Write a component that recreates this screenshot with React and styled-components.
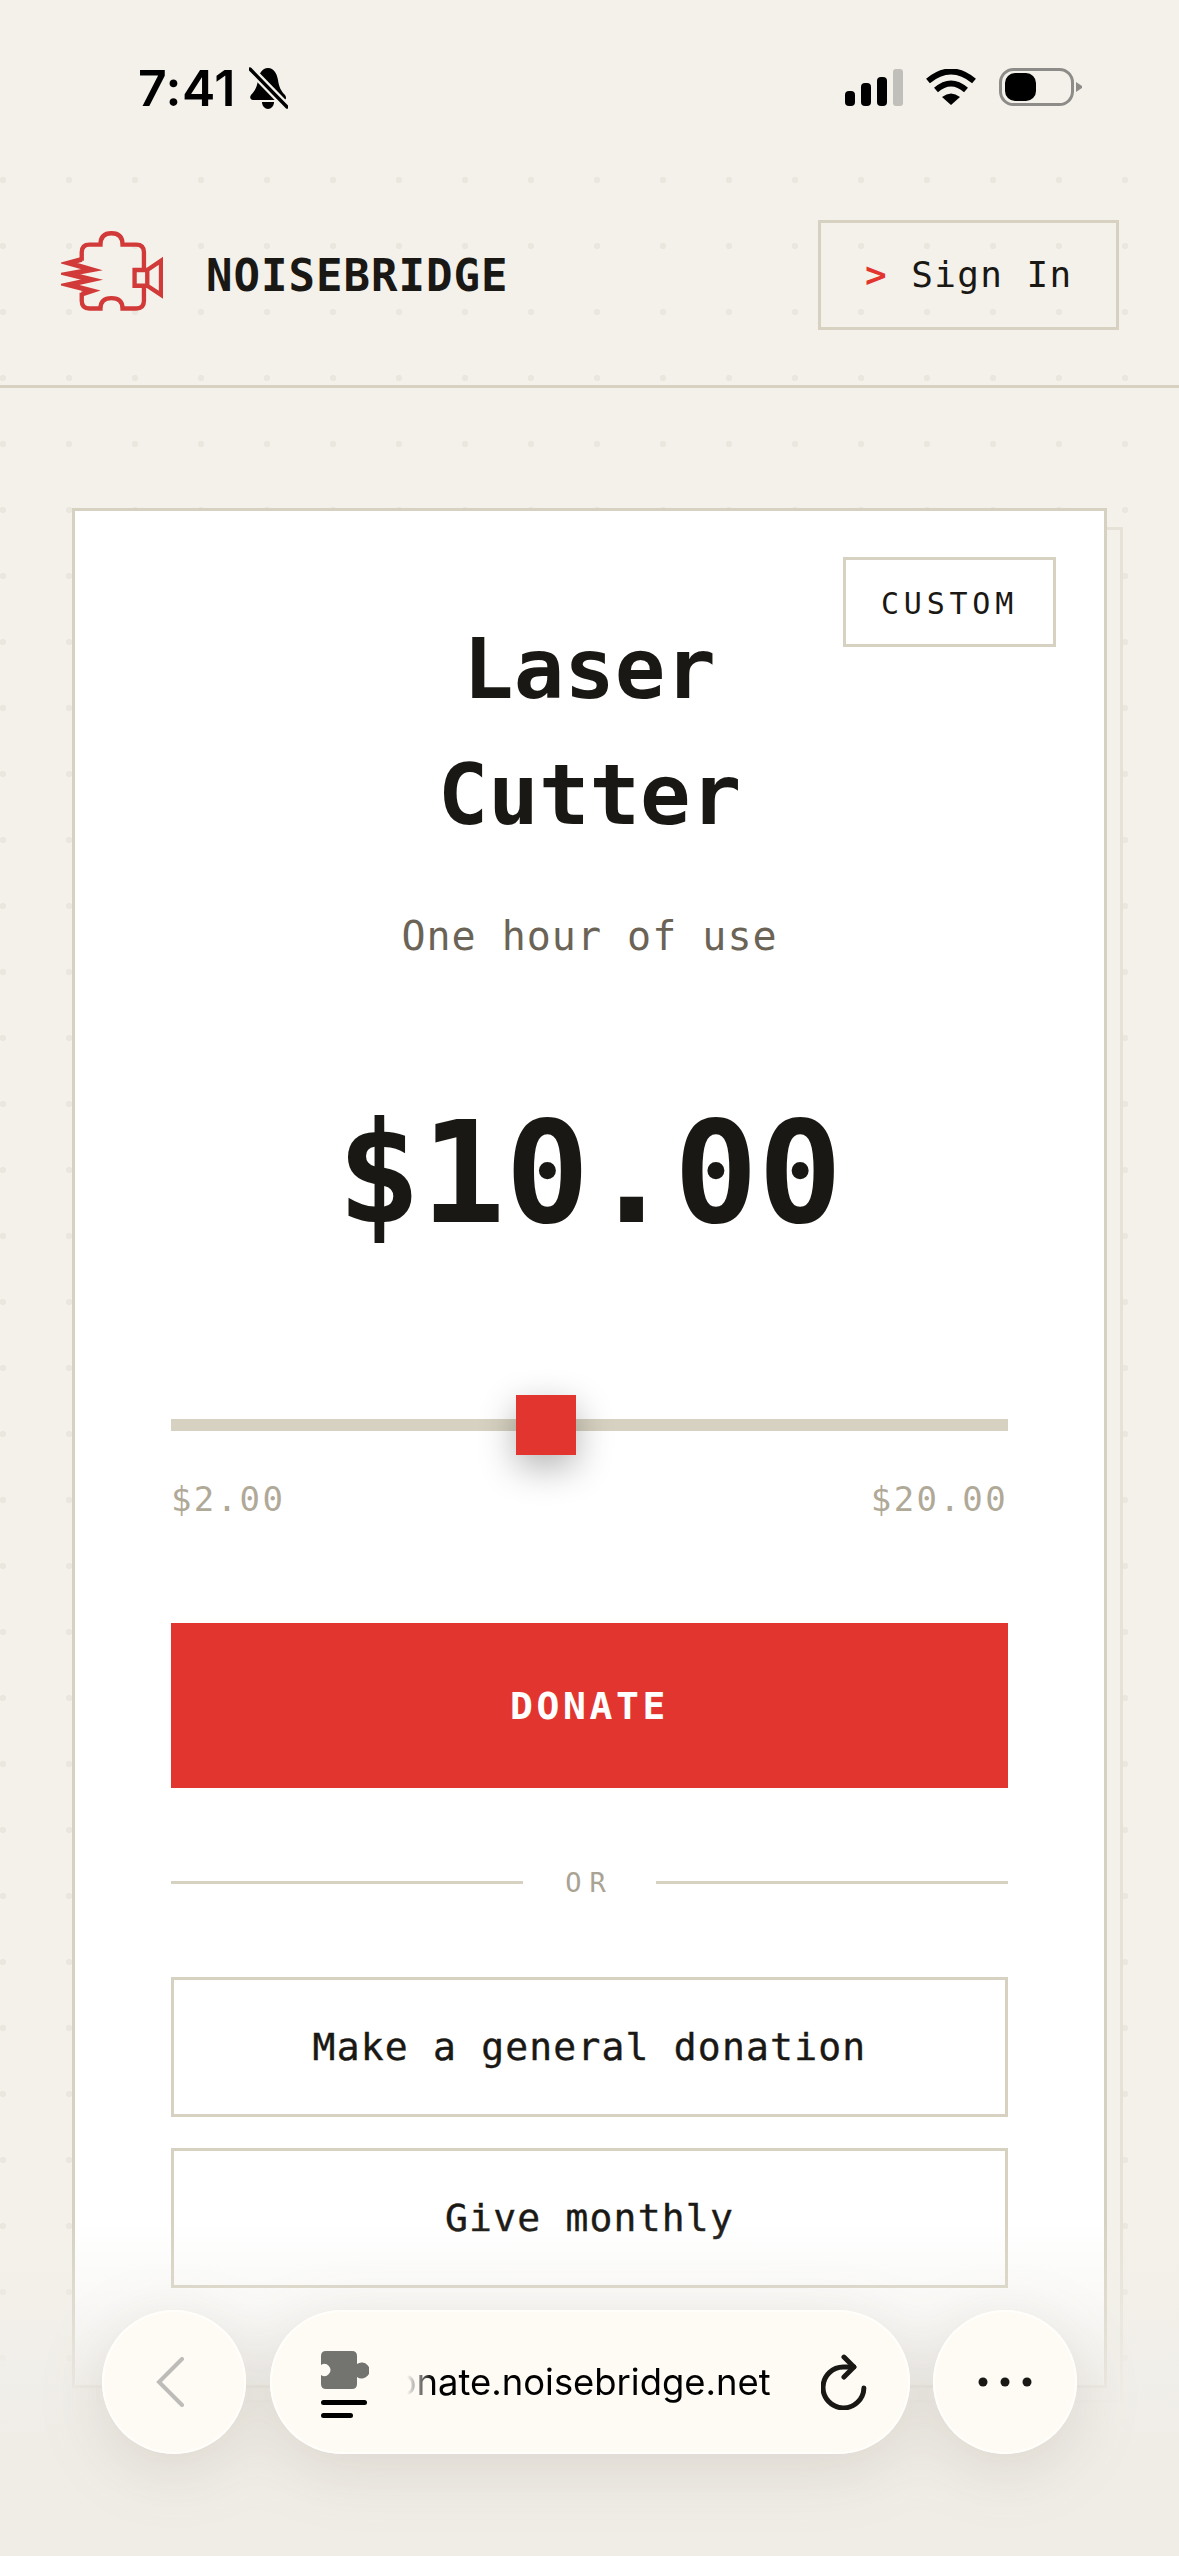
import React from "react";
import styled, { createGlobalStyle } from "styled-components";

const MONO = `"DejaVu Sans Mono", "Liberation Mono", monospace`;
const BORDER = "#d6d1c0";
const INK = "#1a1814";
const RED = "#e33530";

const GlobalStyle = createGlobalStyle`
  html, body {
    margin: 0;
    padding: 0;
    height: 2556px;
    overflow: hidden;
    background: #f4f1ea;
  }
  * { box-sizing: border-box; }
`;

const Page = styled.div`
  position: relative;
  width: 1179px;
  height: 2556px;
  overflow: hidden;
  font-family: ${MONO};
  color: ${INK};
  background-color: #f4f1ea;
  background-image: radial-gradient(circle, #eae7de 3px, transparent 3.5px);
  background-size: 66px 66px;
  background-position: -30px 15px;
`;

const StatusBar = styled.div`
  height: 147px;
  padding: 58px 97px 0 138px;
  display: flex;
  justify-content: space-between;
  align-items: flex-start;
  background: #f4f1ea;
`;

const TimeGroup = styled.div`
  display: flex;
  align-items: center;
  gap: 13px;
`;

const Time = styled.span`
  font-family: Inter, sans-serif;
  font-weight: 600;
  font-size: 50px;
  line-height: 60px;
  letter-spacing: 0.5px;
  color: #000;
`;

const StatusIcons = styled.div`
  display: flex;
  align-items: center;
  gap: 23px;
  padding-top: 10px;
`;

const Header = styled.header`
  height: 241px;
  padding: 73px 60px 0 61px;
  display: flex;
  justify-content: space-between;
  align-items: flex-start;
  border-bottom: 3px solid ${BORDER};
`;

const Brand = styled.div`
  display: flex;
  align-items: flex-start;
  gap: 43px;
  padding-top: 11px;
`;

const BrandName = styled.span`
  margin-top: 5px;
  font-size: 44px;
  line-height: 80px;
  font-weight: 700;
  letter-spacing: 1px;
`;

const SignIn = styled.button`
  width: 301px;
  height: 110px;
  padding: 0 0 2px 44px;
  background: transparent;
  border: 3px solid ${BORDER};
  font-family: ${MONO};
  font-size: 36px;
  letter-spacing: 1.4px;
  color: ${INK};
  text-align: left;
  white-space: pre;
`;

const Caret = styled.span`
  color: ${RED};
  font-weight: 700;
`;

const CardWrap = styled.main`
  position: relative;
  margin: 120px 72px 0 72px;
  z-index: 0;

  &::before {
    content: "";
    position: absolute;
    z-index: -1;
    top: 19px;
    left: 24px;
    right: -16px;
    bottom: -15px;
    background: #f4f1ea;
    border: 3px solid #e6e2d7;
  }
`;

const Card = styled.section`
  position: relative;
  height: 1880px;
  background: #fff;
  border: 3px solid ${BORDER};
  padding: 95px 96px 0;
`;

const Badge = styled.div`
  position: absolute;
  top: 46px;
  right: 48px;
  width: 213px;
  height: 90px;
  padding-top: 2px;
  border: 3px solid ${BORDER};
  display: flex;
  align-items: center;
  justify-content: center;
  font-size: 30px;
  letter-spacing: 4.8px;
`;

const Title = styled.h1`
  margin: 0;
  text-align: center;
  font-size: 84px;
  line-height: 126px;
  font-weight: 700;
`;

const Subtitle = styled.p`
  margin: 48px 0 0;
  text-align: center;
  font-size: 40px;
  line-height: 60px;
  letter-spacing: 1px;
  color: #6b6456;
`;

const Price = styled.div`
  margin-top: 118px;
  text-align: center;
  font-size: 140px;
  line-height: 180px;
  font-weight: 700;
`;

const Track = styled.div`
  position: relative;
  margin-top: 155px;
  height: 12px;
  background: ${BORDER};
`;

const Thumb = styled.div`
  position: absolute;
  top: -24px;
  width: 60px;
  height: 60px;
  background: ${RED};
  box-shadow: 0 12px 36px rgba(0, 0, 0, 0.3);
`;

const RangeLabels = styled.div`
  margin-top: 46px;
  display: flex;
  justify-content: space-between;
  font-size: 34px;
  line-height: 44px;
  letter-spacing: 2.4px;
  color: #b0a998;
`;

const DonateButton = styled.button`
  display: block;
  width: 100%;
  height: 165px;
  margin-top: 102px;
  border: 0;
  background: ${RED};
  color: #fff;
  font-family: ${MONO};
  font-size: 38px;
  font-weight: 700;
  letter-spacing: 3.6px;
`;

const Divider = styled.div`
  margin-top: 76px;
  display: flex;
  align-items: center;
  height: 36px;
  font-size: 27px;
  letter-spacing: 8px;
  color: #aaa393;

  &::before,
  &::after {
    content: "";
    flex: 1;
    height: 3px;
    background: ${BORDER};
  }
`;

const DividerText = styled.span`
  width: 133px;
  text-align: center;
`;

const OutlineButton = styled.button`
  display: block;
  width: 100%;
  height: 140px;
  margin-top: ${(p) => p.$gap}px;
  background: #fff;
  border: 3px solid ${BORDER};
  font-family: ${MONO};
  font-size: 38px;
  letter-spacing: 1.2px;
  -webkit-text-stroke: 0.4px ${INK};
  color: ${INK};
`;

const BrowserChrome = styled.div`
  position: absolute;
  left: 0;
  right: 0;
  bottom: 0;
  height: 336px;
  padding: 90px 102px 0;
  background: linear-gradient(
    to bottom,
    rgba(240, 237, 231, 0) 0,
    rgba(240, 238, 233, 0.35) 80px,
    rgba(240, 238, 233, 0.88) 170px,
    #f0ede7 230px,
    #f0ede7 336px
  );
`;

const ChromeRow = styled.div`
  display: flex;
  justify-content: space-between;
  align-items: flex-start;
  filter: drop-shadow(0 14px 32px rgba(90, 80, 60, 0.14));
`;

const RoundButton = styled.div`
  width: 144px;
  height: 144px;
  border-radius: 50%;
  background: #fdfbf4;
  display: flex;
  align-items: center;
  justify-content: center;
  box-shadow: inset 0 0 0 2px #fffefb;
`;

const BackIcon = styled.svg`
  margin-right: 8px;
`;

const UrlPill = styled.div`
  width: 640px;
  height: 144px;
  border-radius: 72px;
  background: #fdfbf4;
  padding: 0 43px 0 51px;
  display: flex;
  align-items: center;
  box-shadow: inset 0 0 0 2px #fffefb;
`;

const PageIcon = styled.svg`
  flex: none;
  margin-top: 4px;
`;

const UrlText = styled.div`
  width: 365px;
  margin-left: 38px;
  margin-right: 50px;
  display: flex;
  justify-content: flex-end;
  overflow: hidden;
  white-space: nowrap;
  font-family: Inter, sans-serif;
  font-size: 36.4px;
  line-height: 44px;
  color: #000;
  mask-image: linear-gradient(to right, transparent 0, #000 26px);
`;

function Logo() {
  return (
    <svg width="102" height="80" viewBox="60 62 305 238" fill="none" stroke="#d13a38" strokeWidth="13">
      <path d="M122 150V125Q122 102 145 102H178Q178 68 211 68Q244 68 244 102H285Q308 102 308 125V178M308 225V270Q308 293 285 293H244Q244 262 211 262Q178 262 178 293H145Q122 293 122 270V246" />
      <path d="M122 146L82 157L152 177L82 190L152 207L82 222L152 240L122 250" strokeMiterlimit="8" strokeWidth="15" />
      <path d="M280 178H318V225H280ZM318 178L359 150V252L318 225" />
    </svg>
  );
}

function BellSlash() {
  return (
    <svg width="39" height="42" viewBox="0 0 39 42">
      <path d="M19 1C13 1 10 7 9 13C8 20 6 24 2 28C0 31 2 33 4 33H34C37 33 38 31 36 28C32 24 30 20 29 13C28 7 25 1 19 1Z" />
      <path d="M13 35H25C25 39 22 42 19 42C16 42 13 39 13 35Z" />
      <path d="M1 2L38 40" stroke="#f4f1ea" strokeWidth="8" />
      <path d="M1 2L38 40" stroke="#000" strokeWidth="3.4" strokeLinecap="round" />
    </svg>
  );
}

function Signal() {
  return (
    <svg width="58" height="37" viewBox="0 0 58 37">
      <rect x="0" y="22" width="10" height="15" rx="4" />
      <rect x="16" y="14" width="10" height="23" rx="4" />
      <rect x="32" y="8" width="10" height="29" rx="4" />
      <rect x="48" y="0" width="10" height="37" rx="3" fill="#c0bfb9" />
    </svg>
  );
}

function Wifi() {
  return (
    <svg width="50" height="37" viewBox="0 0 50 37" fill="none" stroke="#000" strokeWidth="6">
      <path d="M2 12Q25 -7 48 12" />
      <path d="M10 21Q25 8 40 21" />
      <path d="M25 36L16 28Q25 21 34 28Z" fill="#000" stroke="none" />
    </svg>
  );
}

function Battery() {
  return (
    <svg width="83" height="38" viewBox="0 0 83 38">
      <rect x="1.5" y="1.5" width="72" height="35" rx="13" fill="none" stroke="#8d8c88" strokeWidth="3" />
      <rect x="6" y="5" width="31" height="28" rx="10" fill="#000" />
      <path d="M77 14L83 18V20L77 24Z" fill="#8d8c88" />
    </svg>
  );
}

function BottomBar() {
  return (
    <BrowserChrome>
      <ChromeRow>
        <RoundButton>
          <BackIcon width="28" height="50" viewBox="0 0 28 50" fill="none" stroke="#bdbcb8" strokeWidth="4" strokeLinecap="round">
            <path d="M26 2L3 25L26 48" />
          </BackIcon>
        </RoundButton>
        <UrlPill>
          <PageIcon width="48" height="67" viewBox="0 0 48 67">
            <path
              d="M5 0H31Q36 0 36 5V13A8 8 0 1 1 36 26V33Q36 38 31 38H5Q0 38 0 33V24A6 6 0 1 0 0 14V5Q0 0 5 0Z"
              fill="#737370"
            />
            <rect x="0" y="49" width="46" height="5" rx="2.5" />
            <rect x="0" y="62" width="32" height="5" rx="2.5" />
          </PageIcon>
          <UrlText>donate.noisebridge.net</UrlText>
          <svg width="46" height="56" viewBox="0 0 46 56" fill="none" stroke="#1a1814" strokeWidth="5" strokeLinecap="round" strokeLinejoin="round">
            <path d="M43 34A20.5 20.5 0 1 1 23 13H33" />
            <path d="M23 3L33 13L23 23" />
          </svg>
        </UrlPill>
        <RoundButton>
          <svg width="54" height="10" viewBox="0 0 54 10" fill="#1a1814">
            <circle cx="5" cy="5" r="4.5" />
            <circle cx="27" cy="5" r="4.5" />
            <circle cx="49" cy="5" r="4.5" />
          </svg>
        </RoundButton>
      </ChromeRow>
    </BrowserChrome>
  );
}

const MIN = 2;
const MAX = 20;
const VALUE = 10;
const TRACK_W = 837;
const THUMB_W = 60;

export default function App() {
  const thumbLeft = ((VALUE - MIN) / (MAX - MIN)) * (TRACK_W - THUMB_W);

  return (
    <Page>
      <GlobalStyle />
      <StatusBar>
        <TimeGroup>
          <Time>7:41</Time>
          <BellSlash />
        </TimeGroup>
        <StatusIcons>
          <Signal />
          <Wifi />
          <Battery />
        </StatusIcons>
      </StatusBar>
      <Header>
        <Brand>
          <Logo />
          <BrandName>NOISEBRIDGE</BrandName>
        </Brand>
        <SignIn>
          <Caret>&gt;</Caret> Sign In
        </SignIn>
      </Header>
      <CardWrap>
        <Card>
          <Badge>CUSTOM</Badge>
          <Title>
            Laser
            <br />
            Cutter
          </Title>
          <Subtitle>One hour of use</Subtitle>
          <Price>$10.00</Price>
          <Track>
            <Thumb style={{ left: thumbLeft }} />
          </Track>
          <RangeLabels>
            <span>$2.00</span>
            <span>$20.00</span>
          </RangeLabels>
          <DonateButton>DONATE</DonateButton>
          <Divider>
            <DividerText>OR</DividerText>
          </Divider>
          <OutlineButton $gap={77}>Make a general donation</OutlineButton>
          <OutlineButton $gap={31}>Give monthly</OutlineButton>
        </Card>
      </CardWrap>
      <BottomBar />
    </Page>
  );
}
